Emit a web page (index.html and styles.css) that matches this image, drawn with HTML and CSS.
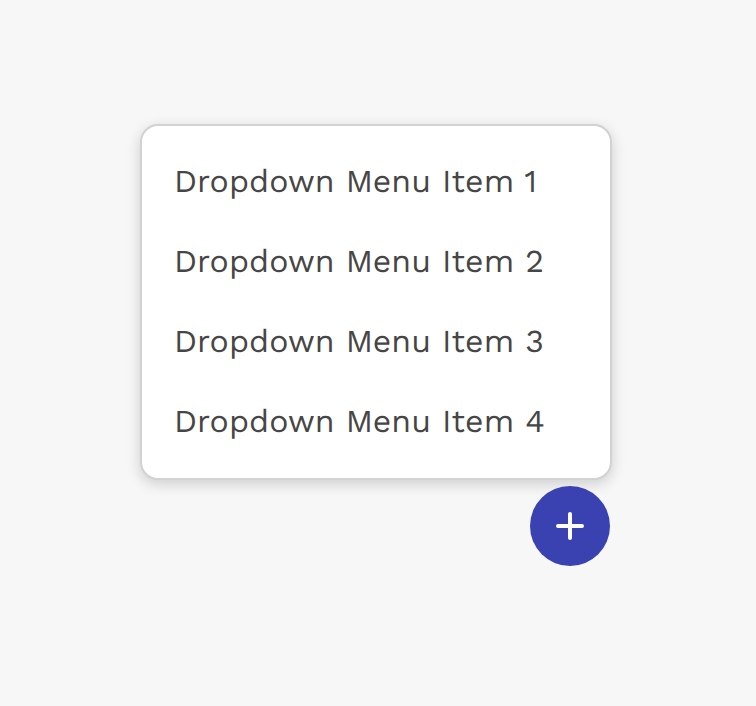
FILE: index.html
```html
<!DOCTYPE html>
<html lang="en">
<head>
<meta charset="utf-8">
<title>Dropdown menu</title>
<link rel="stylesheet" href="styles.css">
</head>
<body>
<main class="dropdown">
  <ul class="menu">
    <li class="item">Dropdown Menu Item 1</li>
    <li class="item">Dropdown Menu Item 2</li>
    <li class="item">Dropdown Menu Item 3</li>
    <li class="item">Dropdown Menu Item 4</li>
  </ul>
  <button class="fab" aria-label="Add">
    <svg class="plus" viewBox="0 0 32 32"><path d="M16 4v24M4 16h24"/></svg>
  </button>
</main>
</body>
</html>
```
FILE: styles.css
```css
body { margin: 0; background: #f7f7f7; font-family: "Work Sans", Inter, sans-serif; }
.dropdown { display: flex; flex-direction: column; align-items: flex-end; gap: 6px; width: 472px; margin: 124px 0 0 140px; }
.menu { box-sizing: border-box; width: 472px; height: 356px; margin: 0; padding: 15px 0 17px; list-style: none; background: #fff; border: 2px solid #d2d2d2; border-radius: 18px; box-shadow: 0 4px 14px rgba(0,0,0,.17); }
.item { display: flex; height: 80px; padding-left: 32px; align-items: center; font-size: 32px; line-height: 40px; letter-spacing: .08px; color: #464646; text-rendering: geometricPrecision; }
.fab { position: relative; width: 80px; height: 80px; margin-right: 2px; padding: 0; border: 0; border-radius: 50%; background: #3a41b1; display: grid; place-items: center; }
.plus { width: 32px; height: 32px; fill: none; stroke: #fff; stroke-width: 4; stroke-linecap: round; }
```
